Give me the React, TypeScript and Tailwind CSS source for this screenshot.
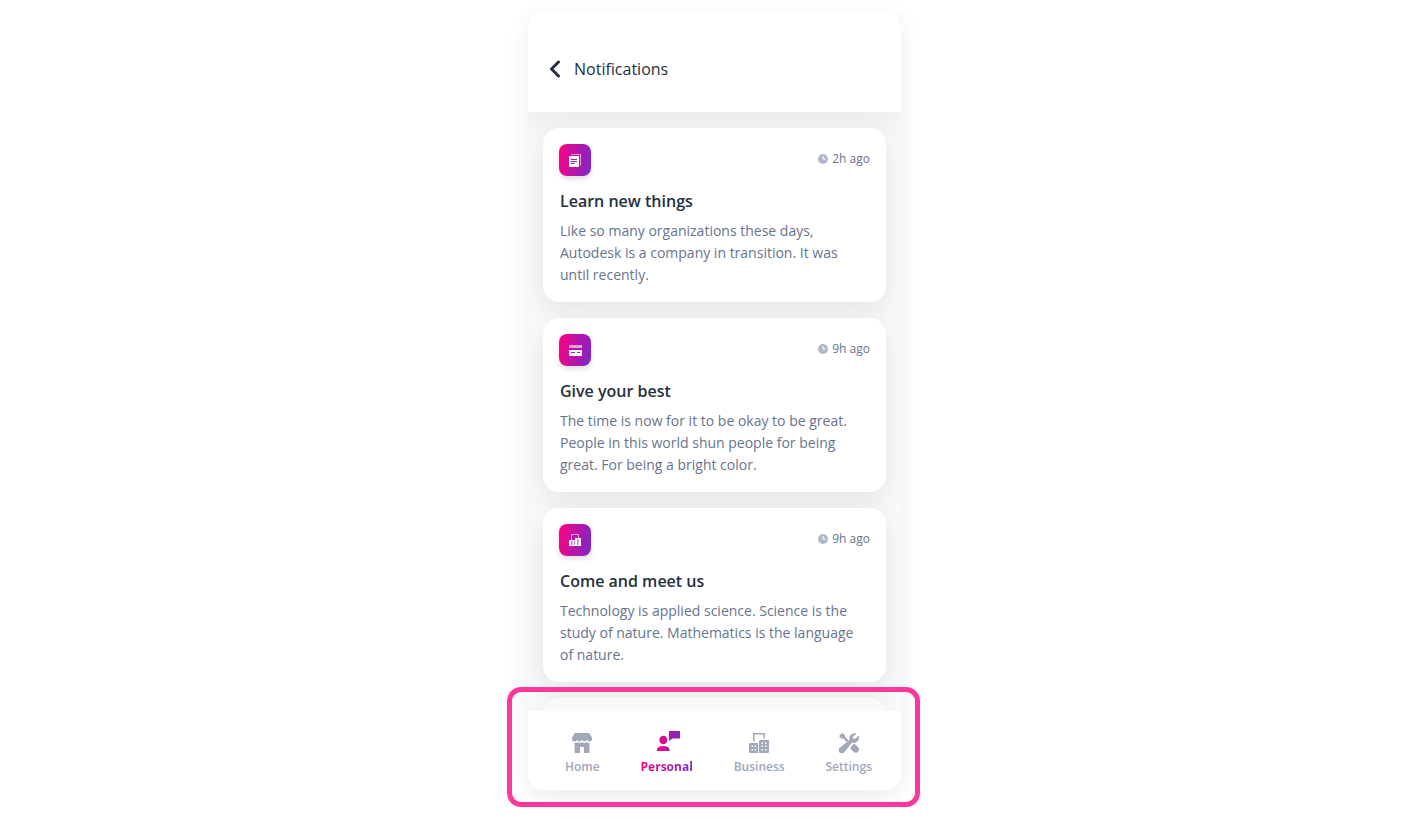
import type { ReactNode } from "react";

const storyIcon = (
  <svg viewBox="0 0 12 13" className="h-[13px] w-3" fill="white" aria-hidden="true">
    <path d="M2 0h10v11.500h-1V1H2z" opacity=".6" />
    <path fillRule="evenodd" d="M1 2h9v11H1q-1 0-1-1V3q0-1 1-1zM2 5v1h6V5zM2 7v1h6V7zM2 9v1h3.500V9z" />
  </svg>
);

const cardIcon = (
  <svg viewBox="0 0 13 11" className="h-[11px] w-[13px]" fill="white" aria-hidden="true">
    <path d="M1 0h11q1 0 1 1v2H0V1q0-1 1-1z" opacity=".6" />
    <path fillRule="evenodd" d="M0 5h13v5q0 1-1 1H1q-1 0-1-1zM2 7v1h4V7zM8 7v1h3V7z" />
  </svg>
);

const buildingIcon = (
  <svg viewBox="0 0 12 12" className="size-3" fill="white" aria-hidden="true">
    <path d="M2 0h8v4H9V1H3v5H2z" opacity=".6" />
    <path d="M0 6h6V4h6v8H0z" />
    <path d="M2 7h1.500v4H2zM5 7h1v4H5zM8 5h1.500v6H8z" fill="#bb14a6" opacity=".6" />
  </svg>
);

type Notice = { title: string; text: string; time: string; icon: ReactNode };

const notices: Notice[] = [
  {
    title: "Learn new things",
    text: "Like so many organizations these days, Autodesk is a company in transition. It was until recently.",
    time: "2h ago",
    icon: storyIcon,
  },
  {
    title: "Give your best",
    text: "The time is now for it to be okay to be great. People in this world shun people for being great. For being a bright color.",
    time: "9h ago",
    icon: cardIcon,
  },
  {
    title: "Come and meet us",
    text: "Technology is applied science. Science is the study of nature. Mathematics is the language of nature.",
    time: "9h ago",
    icon: buildingIcon,
  },
];

function NoticeCard({ title, text, time, icon }: Notice) {
  return (
    <article className="shrink-0 rounded-2xl bg-white p-4 shadow-[0_10px_27px_rgba(20,20,20,0.085)]">
      <div className="flex items-start justify-between">
        <span className="flex size-8 items-center justify-center rounded-lg bg-[linear-gradient(100deg,#ff0080,#7928ca)] shadow-[0_3px_5px_rgba(0,0,0,0.13)]">
          {icon}
        </span>
        <span className="flex items-center gap-1 pt-1.5 text-xs leading-[18px] text-[#67748e]">
          <svg viewBox="0 0 10 10" className="size-2.5" aria-hidden="true">
            <circle cx="5" cy="5" r="5" fill="#b0b8c9" />
            <path d="M5 2v3h2.500" fill="none" stroke="white" strokeWidth="1" />
          </svg>
          {time}
        </span>
      </div>
      <h2 className="mt-3 pl-px text-base leading-[26px] font-semibold text-[#252f40]">{title}</h2>
      <p className="mt-1.5 pl-px text-sm leading-[22px] text-[#67748e]">{text}</p>
    </article>
  );
}

const homeIcon = (
  <svg viewBox="0 0 20 20" className="size-5" fill="currentColor" aria-hidden="true">
    <path d="M3.500 0h13q1 0 1.400.9L20 4.800a2.600 2.600 0 0 1-5 1.800 2.600 2.600 0 0 1-5 0 2.600 2.600 0 0 1-5 0 2.600 2.600 0 0 1-5-1.800L2.100.9Q2.500 0 3.500 0z" />
    <path d="M2.500 10q1.500.1 2.700-.9 2.300 1.700 4.800 0 2.500 1.700 4.800 0 1.200 1 2.700.9V19q0 1-1 1H12v-6H8v6H3.500q-1 0-1-1z" />
  </svg>
);

const personalIcon = (
  <svg viewBox="0 0 23 20" className="h-5 w-[23px]" aria-hidden="true">
    <defs>
      <linearGradient id="personal" x1="0" y1="0" x2="23" y2="0" gradientUnits="userSpaceOnUse">
        <stop stopColor="#ff0080" />
        <stop offset="1" stopColor="#7928ca" />
      </linearGradient>
    </defs>
    <g fill="url(#personal)">
      <ellipse cx="6.300" cy="9" rx="4" ry="4.300" />
      <path d="M0 20v-1.500Q.500 15 6.300 15t6.200 3.500V20zM12 0h11v7.500h-7.500L12 10z" />
    </g>
  </svg>
);

const businessIcon = (
  <svg viewBox="0 0 20 20" className="size-5" fill="currentColor" aria-hidden="true">
    <path d="M4 0h12v5.500h-1.500v-4h-9V8H4z" />
    <path
      fillRule="evenodd"
      d="M1 10h8v10H1q-1 0-1-1v-8q0-1 1-1zM12 7h7q1 0 1 1v11q0 1-1 1h-9V8q0-1 2-1zM2.500 12.500V14H4v-1.500zM5.500 12.500V14H7v-1.500zM2.500 16v1.500H4V16zM5.500 16v1.500H7V16zM12.500 9.500V11H14V9.500zM16 9.500V11h1.500V9.500zM12.500 12.500V14H14v-1.500zM16 12.500V14h1.500v-1.500zM12.500 16v1.500H14V16zM16 16v1.500h1.500V16z"
    />
  </svg>
);

const settingsIcon = (
  <svg viewBox="0 0 20 20" className="size-5" fill="currentColor" aria-hidden="true">
    <path d="M3 0 6 2v2l3.500 3.500-1.700 1.700L4.300 5.600h-2L0 3z" />
    <path d="M17.800.8A5.300 5.300 0 0 0 10.500 7L1 14.400a3.300 3.300 0 1 0 4.600 4.600L13 9.600a5.300 5.300 0 0 0 6.600-7L16.400 5.800 14 5.500l-.2-2z" />
    <path d="m12 13.800 3.200-3.200 3.700 3.400a3.200 3.200 0 0 1-4.600 4.700l-3-3.300z" />
  </svg>
);

const tabs = [
  { label: "Home", icon: homeIcon, active: false },
  { label: "Personal", icon: personalIcon, active: true },
  { label: "Business", icon: businessIcon, active: false },
  { label: "Settings", icon: settingsIcon, active: false },
];

export default function App() {
  return (
    <div className="flex h-screen justify-center bg-white pt-[11px] pb-[29px] pl-0.5 font-['Open_Sans',sans-serif]">
      <div className="flex w-full max-w-[373px] flex-col rounded-2xl bg-[#f8f9fa] shadow-[0_8px_24px_rgba(20,25,35,0.08)]">
        <header className="z-10 flex shrink-0 items-center gap-2 rounded-t-2xl bg-white px-5 pt-[51px] pb-9 shadow-[0_12px_27px_rgba(20,20,20,0.06)] [clip-path:inset(0_0_-60px_0)]">
          <button type="button" aria-label="Back" className="flex h-[14px] w-[18px] items-center">
            <svg viewBox="0 0 14 18" className="h-[18px] w-[14px]" fill="none" stroke="#252f40" strokeWidth="3" strokeLinecap="round" strokeLinejoin="round" aria-hidden="true">
              <path d="M10.500 2 3.500 9l7 7" />
            </svg>
          </button>
          <h1 className="text-base leading-[14px] text-[#252f40]">Notifications</h1>
        </header>
        <main className="relative z-10 flex min-h-0 flex-1 flex-col gap-4 overflow-hidden px-[15px] pt-4">
          {notices.map((notice) => (
            <NoticeCard key={notice.title} {...notice} />
          ))}
          <div className="h-[174px] shrink-0 rounded-2xl bg-[#f9f9f9] shadow-[0_10px_27px_rgba(20,20,20,0.085)]" />
        </main>
        <nav className="relative z-20 flex h-[79px] shrink-0 justify-between rounded-b-2xl bg-white pt-[22px] pr-[29px] pl-[37px]">
          {tabs.map(({ label, icon, active }) => (
            <a
              key={label}
              href={"#" + label.toLowerCase()}
              className={
                active
                  ? "-mt-0.5 flex flex-col items-center gap-[7px] text-xs leading-[18px] font-bold"
                  : "flex flex-col items-center gap-[5px] text-xs leading-[18px] font-semibold text-[#a0a8ba]"
              }
            >
              <span className={active ? "pl-1" : ""}>{icon}</span>
              <span className={active ? "bg-[linear-gradient(100deg,#ff0080,#7928ca)] bg-clip-text text-transparent" : ""}>{label}</span>
            </a>
          ))}
          <div className="pointer-events-none absolute -top-6 -right-[19px] -bottom-[17px] -left-[21px] rounded-[14px] border-[5px] border-[#ff379b]" />
        </nav>
      </div>
    </div>
  );
}
